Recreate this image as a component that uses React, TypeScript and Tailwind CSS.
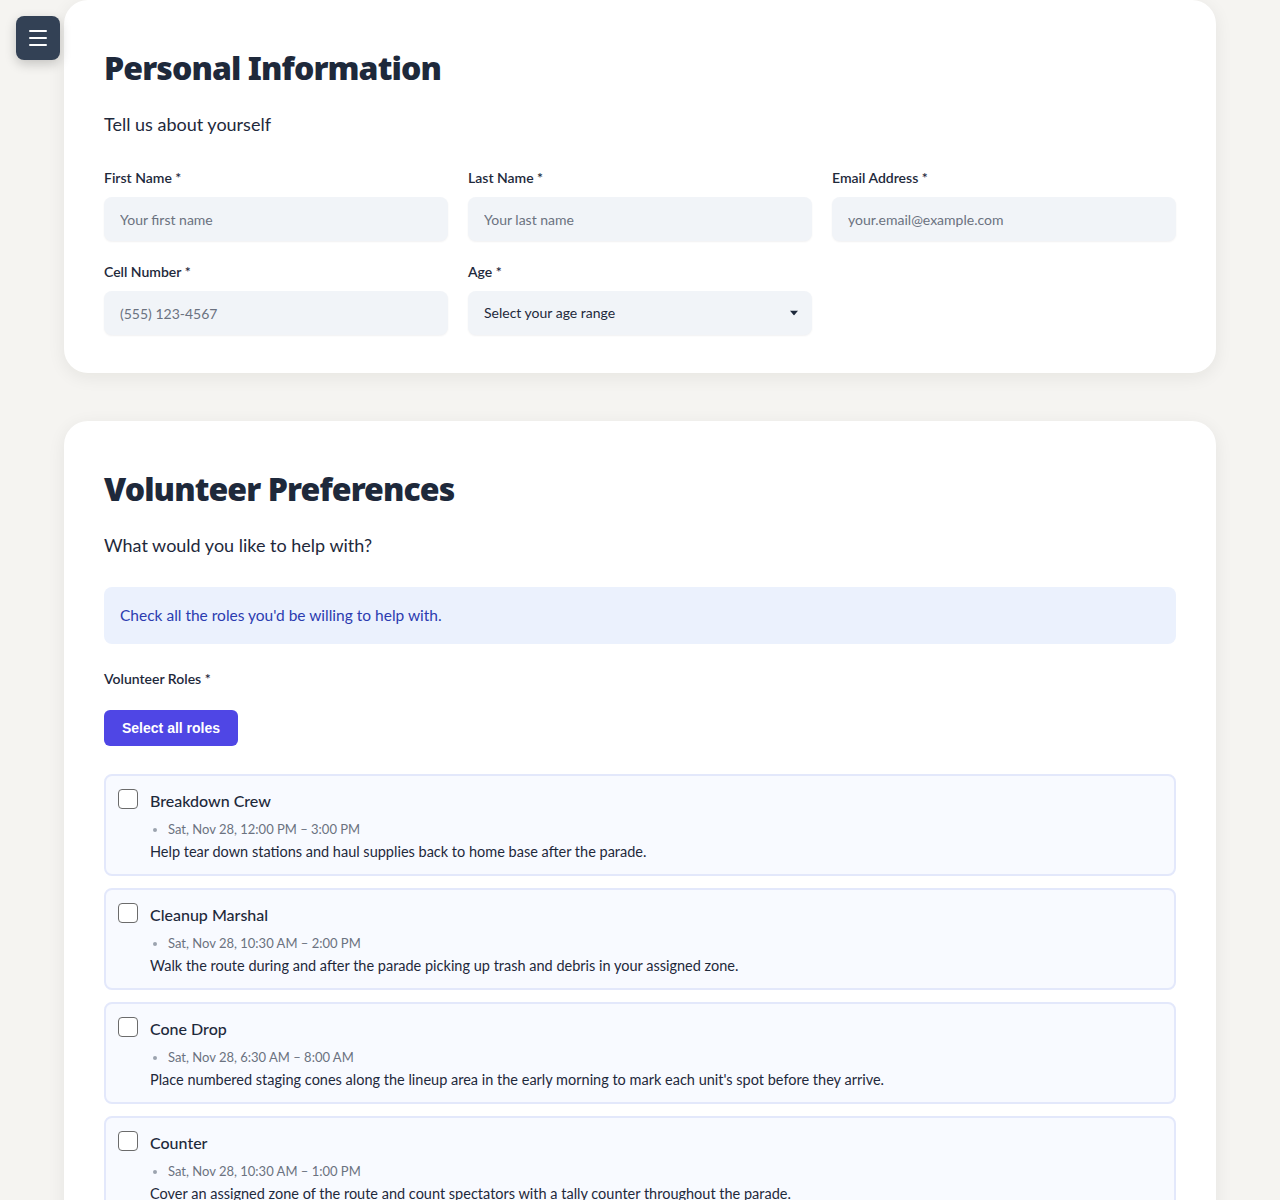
import { Menu } from "lucide-react";

const roles = [
  {
    name: "Breakdown Crew",
    time: "Sat, Nov 28, 12:00 PM – 3:00 PM",
    description: "Help tear down stations and haul supplies back to home base after the parade.",
  },
  {
    name: "Cleanup Marshal",
    time: "Sat, Nov 28, 10:30 AM – 2:00 PM",
    description: "Walk the route during and after the parade picking up trash and debris in your assigned zone.",
  },
  {
    name: "Cone Drop",
    time: "Sat, Nov 28, 6:30 AM – 8:00 AM",
    description:
      "Place numbered staging cones along the lineup area in the early morning to mark each unit's spot before they arrive.",
  },
  {
    name: "Counter",
    time: "Sat, Nov 28, 10:30 AM – 1:00 PM",
    description: "Cover an assigned zone of the route and count spectators with a tally counter throughout the parade.",
  },
];

const inputClass =
  "h-11 w-full rounded-lg bg-[#f1f4f8] px-4 text-sm text-[#1e293b] placeholder:text-[#6b7280] shadow-[0_1px_2px_rgba(15,23,42,0.06)] outline-none";

const Field = ({ label, placeholder, type = "text" }: { label: string; placeholder: string; type?: string }) => (
  <label className="flex flex-col gap-[9px]">
    <span className="text-sm font-semibold text-[#1e293b]">{label}</span>
    <input type={type} placeholder={placeholder} className={inputClass} />
  </label>
);

const Card = ({ title, subtitle, children }: { title: string; subtitle: string; children: React.ReactNode }) => (
  <section className="rounded-3xl bg-white px-10 pt-[45px] pb-[38px] shadow-[0_4px_18px_rgba(30,30,20,0.07)]">
    <h2
      className="text-[32px] leading-[46px] font-black tracking-[-0.9px] text-[#1e293b]"
      style={{ fontFamily: '"Noto Sans", sans-serif' }}
    >
      {title}
    </h2>
    <p className="mt-[19px] text-lg text-[#1e293b]">{subtitle}</p>
    {children}
  </section>
);

export default function App() {
  return (
    <div className="min-h-screen bg-[#f5f4f1] px-16" style={{ fontFamily: "Lato, sans-serif" }}>
      <button
        type="button"
        className="fixed top-4 left-4 flex h-11 w-11 items-center justify-center rounded-lg bg-[#334155] text-white shadow-[0_4px_12px_rgba(0,0,0,0.2)]"
      >
        <Menu className="h-6 w-6" strokeWidth={2} />
      </button>

      <div className="flex flex-col gap-12">
        <Card title="Personal Information" subtitle="Tell us about yourself">
          <div className="mt-[30px] grid grid-cols-3 gap-x-5 gap-y-[21px]">
            <Field label="First Name *" placeholder="Your first name" />
            <Field label="Last Name *" placeholder="Your last name" />
            <Field label="Email Address *" placeholder="your.email@example.com" type="email" />
            <Field label="Cell Number *" placeholder="(555) 123-4567" type="tel" />
            <label className="flex flex-col gap-[9px]">
              <span className="text-sm font-semibold text-[#1e293b]">Age *</span>
              <div className="relative">
                <select className={`${inputClass} appearance-none pr-10`} defaultValue="">
                  <option value="">Select your age range</option>
                  <option>Under 18</option>
                  <option>18 – 24</option>
                  <option>25 – 34</option>
                  <option>35 – 54</option>
                  <option>55+</option>
                </select>
                <svg
                  viewBox="0 0 10 6"
                  className="pointer-events-none absolute top-1/2 right-[13px] h-[5px] w-[10px] -translate-y-1/2 text-[#1e293b]"
                >
                  <path d="M0 0h10L5 6z" fill="currentColor" />
                </svg>
              </div>
            </label>
          </div>
        </Card>

        <Card title="Volunteer Preferences" subtitle="What would you like to help with?">
          <div className="mt-[28px] rounded-lg bg-[#ebf1fd] px-4 py-[17px] text-[15.5px] text-[#2b3cb0]">
            Check all the roles you'd be willing to help with.
          </div>
          <div className="mt-[25px] text-sm font-semibold text-[#1e293b]">Volunteer Roles *</div>
          <button
            type="button"
            className="mt-[21px] h-9 rounded-md bg-[#4f46e5] px-[18px] text-sm font-bold text-white"
            style={{ fontFamily: '"Liberation Sans", Arial, sans-serif' }}
          >
            Select all roles
          </button>
          <div className="mt-7 flex flex-col gap-3">
            {roles.map((role) => (
              <label
                key={role.name}
                className="flex gap-3 rounded-lg border-2 border-[#e3e8fb] bg-[#f8faff] px-3 pt-3 pb-3"
              >
                <input
                  type="checkbox"
                  className="mt-[1px] h-5 w-5 shrink-0 appearance-none rounded-[4px] border border-[#6b6b6b] bg-white"
                />
                <div className="flex flex-col">
                  <span className="text-base leading-[26px] font-medium text-[#1e293b]">{role.name}</span>
                  <ul className="mt-[5px] list-disc pl-[18px] text-[13px] leading-5 text-[#6b7280] marker:text-[#9ca3af]">
                    <li>{role.time}</li>
                  </ul>
                  <p className="mt-[3px] text-[14.5px] leading-5 text-[#1e293b]">{role.description}</p>
                </div>
              </label>
            ))}
          </div>
        </Card>
      </div>
    </div>
  );
}
